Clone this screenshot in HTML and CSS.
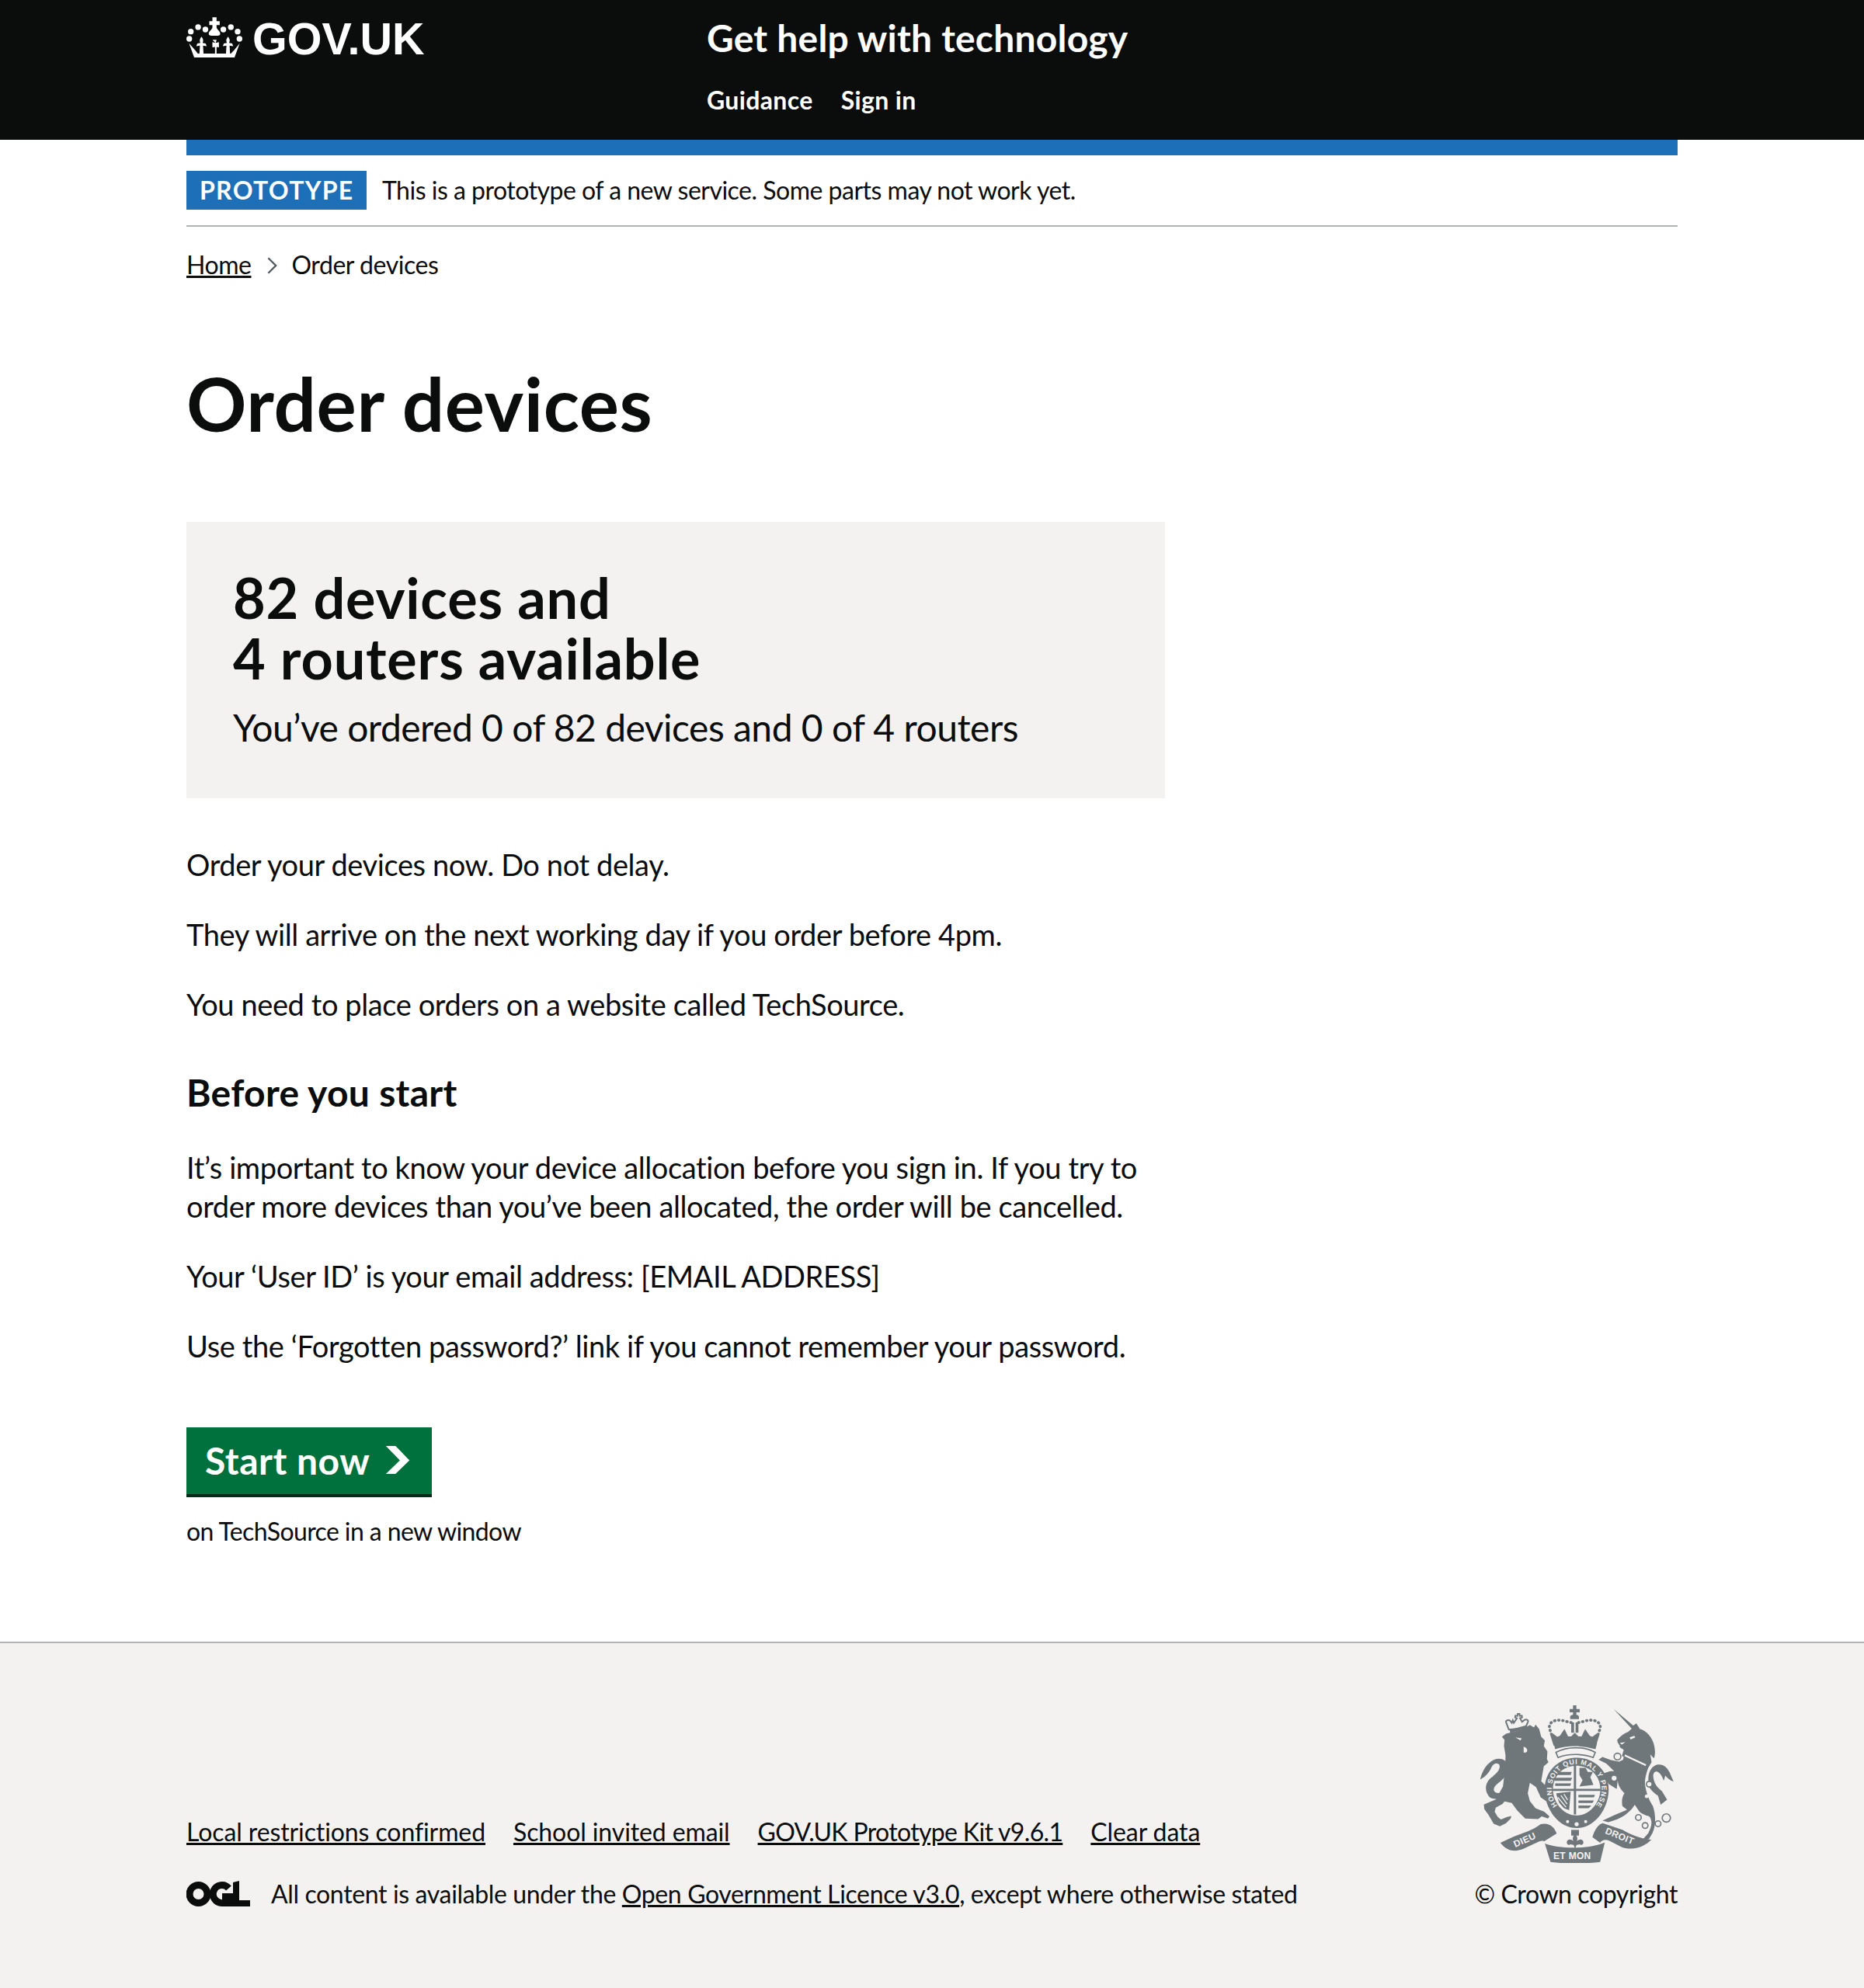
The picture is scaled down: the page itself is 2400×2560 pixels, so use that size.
FILE: index.html
```html
<!DOCTYPE html>
<html lang="en">
<head>
<meta charset="utf-8">
<title>Order devices</title>
<link rel="stylesheet" href="styles.css">
</head>
<body>
<header class="site-header">
  <div class="header-inner">
    <a class="logo" href="#">
      <svg class="crown" viewBox="60 62 215 160" aria-hidden="true">
        <g fill="#fff">
          <circle cx="77" cy="120" r="11"/><circle cx="105" cy="103" r="11"/><circle cx="133" cy="112" r="11"/>
          <circle cx="202" cy="112" r="11"/><circle cx="231" cy="103" r="11"/><circle cx="257" cy="120" r="11"/>
          <circle cx="71" cy="148" r="11"/><circle cx="264" cy="148" r="11"/>
          <path d="M160 65h16v15h12v15h-12v10c4 10 14 14 14 24 0 7-10 7-22 7s-22 0-22-7c0-10 10-14 14-24V95h-12V80h12z"/>
          <path d="M160 152h16l-3 12 12-3v20l-9-2v30h-6v-30l-10 2v-20l12 3z"/>
          <path d="M118 140c6 8 9 14 4 24l12 2 4 10-14-2 2 34h-16l2-34-14 2 4-10 12-2c-5-10-2-16 4-24z"/>
          <path d="M220 140c6 8 9 14 4 24l12 2 4 10-14-2 2 34h-16l2-34-14 2 4-10 12-2c-5-10-2-16 4-24z"/>
          <path d="M70 165l22 25 12 15h127l14-15 20-25-20 55H90z"/>
        </g>
      </svg>
      <span class="wordmark">GOV.UK</span>
    </a>
    <div class="header-content">
      <a class="service-name" href="#">Get help with technology</a>
      <nav class="header-nav">
        <a href="#">Guidance</a>
        <a href="#">Sign in</a>
      </nav>
    </div>
  </div>
</header>

<div class="page-width">
  <div class="phase-banner">
    <strong class="phase-tag">PROTOTYPE</strong>
    <span>This is a prototype of a new service. Some parts may not work yet.</span>
  </div>
  <nav class="breadcrumbs">
    <a href="#">Home</a>
    <svg class="crumb-chevron" viewBox="0 0 14 24" aria-hidden="true"><path d="M1.500 1.500 12 12 1.500 22.500" fill="none" stroke="#505a5f" stroke-width="2.600"/></svg>
    <span>Order devices</span>
  </nav>

  <main class="main">
    <h1 class="page-title">Order devices</h1>
    <div class="column">
      <section class="panel">
        <h2 class="panel-title">82 devices and<br>4 routers available</h2>
        <p class="panel-sub">You’ve ordered 0 of 82 devices and 0 of 4 routers</p>
      </section>
      <p class="body">Order your devices now. Do not delay.</p>
      <p class="body">They will arrive on the next working day if you order before 4pm.</p>
      <p class="body">You need to place orders on a website called TechSource.</p>
      <h2 class="section-title">Before you start</h2>
      <p class="body">It’s important to know your device allocation before you sign in. If you try to order more devices than you’ve been allocated, the order will be cancelled.</p>
      <p class="body">Your ‘User ID’ is your email address: [EMAIL ADDRESS]</p>
      <p class="body">Use the ‘Forgotten password?’ link if you cannot remember your password.</p>
      <a class="start-button" href="#">Start now
        <svg class="start-icon" viewBox="0 0 33 40" aria-hidden="true"><path fill="#fff" d="M0 0h13.100L32 19.500 13 38H0l19-18.500z"/></svg>
      </a>
      <p class="small">on TechSource in a new window</p>
    </div>
  </main>
</div>

<footer class="site-footer">
  <div class="footer-inner">
    <div class="footer-meta">
      <ul class="footer-links">
        <li><a href="#">Local restrictions confirmed</a></li>
        <li><a href="#">School invited email</a></li>
        <li class="link-tight"><a href="#">GOV.UK Prototype Kit v9.6.1</a></li>
        <li><a href="#">Clear data</a></li>
      </ul>
      <div class="licence">
        <svg class="ogl" viewBox="0 0 82 34" aria-hidden="true">
          <circle cx="15.500" cy="17" r="11.500" fill="none" stroke="#0b0c0c" stroke-width="9"/>
          <path d="M54.500 9.500A11.500 11.500 0 1 0 46 28.500" fill="none" stroke="#0b0c0c" stroke-width="9"/>
          <path d="M46 16h14v17H46z" fill="#0b0c0c"/>
          <path d="M60 2l8-2v25h14v8H60z" fill="#0b0c0c"/>
        </svg>
        <span>All content is available under the <a href="#">Open Government Licence v3.0</a>, except where otherwise stated</span>
      </div>
    </div>
    <div class="footer-crest">
      <svg class="crest" viewBox="70 80 750 610" aria-hidden="true">
        <defs><path id="ring-path" d="M371 467A97 97 0 1 1 519 467"/></defs>
        <g class="crest-ink">
          <!-- lion -->
          <path d="M172 190l30-8 40-12 22-14 16 10 6-12 14 18 8 30 14 14-4 22 14 20-2 30 6 12-18 16-6 34-4 24 26 26 12 22 14 14-6 16-22 2-26-18-18-40-24-16-8 40 8 30 22 28 34 14 20 18-6 8-24-8-14 10-50-2-30-30-22-30-28-6-8 10-26 14-4 16 12 20 12 10 24-10 16-4-2 10-18 18-24 12-24-10-20-34-16-22-2-18 46-20 28-50 8-70 2-50-6-36 2-24-10-12z"/>
          <path d="M108 435c-22-24-18-58 10-78 16-12 34-30 28-46-6-10-22-8-30 8-8 20-24 38-44 48 6-30 24-62 52-76 26-10 50-2 54 24 4 26-14 50-34 64-20 14-28 34-8 40 12 2 24-4 36-10l6 16c-24 14-50 24-70 10z"/>
          <path d="M183 174l-11-28c-2-8 10-12 16-6l6 8 4-10 4 10 12-18-7-3 1-7 8 1 1-8h7l1 8 8-1 1 7-8 3 8 14 10-8c8-4 16 2 12 10l-10 22z" fill="none" stroke="#6f777b" stroke-width="6"/>
          <path d="M186 175l66-18 4 10-68 20z"/>
          <!-- unicorn -->
          <path d="M588 94L664 158 676 150 690 172C715 178 740 205 746 240 750 262 748 275 744 285L730 270 735 300 722 322C712 350 705 375 712 400 716 420 722 440 740 470 752 505 752 545 738 575L724 598 700 600 722 575C738 545 738 525 726 510 710 505 690 500 680 480L670 465C655 490 630 510 600 522L568 532 545 526 590 505 640 484 622 470C618 450 622 430 630 420 610 400 605 385 604 370L600 404 570 385 542 345 575 335 590 335 560 305 530 290 545 280 578 292 610 298 625 290 630 262 625 250C612 245 610 240 612 236L604 224 602 214C615 198 630 188 645 182L658 170z"/>
          <path d="M728 400C715 360 725 320 755 310 780 305 795 320 805 340L820 375C805 370 795 360 788 352L782 372C776 355 768 340 756 336 742 334 738 350 744 370 750 390 760 400 775 412L795 445 770 465 760 430C745 420 735 410 728 400z"/>
          <!-- royal crown -->
          <path d="M431 78h13v16h13v13h-13v10c6 0 10 4 10 8v8h-34v-8c0-4 4-8 11-8v-10h-13V94h13z"/>
          <path d="M424 146h11v40h-11zM441 146h11v40h-11z"/>
          <path d="M356 236l-14-44c-2-6 6-8 10-4l18 14 10-4 18-26 14 28 12 0 14-14 14 14 12 0 14-28 18 26 10 4 18-14c4-4 12-2 10 4l-14 44z"/>
          <path d="M365 262c22-12 48-18 76-18s54 6 76 18l-8 20c-20-8-42-12-68-12s-50 4-68 12z" fill="#f3f2f1" stroke="#6f777b" stroke-width="5"/>
          <path d="M356 226h168l-6 24c-24-8-50-12-78-12s-54 4-78 12z"/>
          <path d="M343 178c-14-30 16-50 60-36l34 8M533 178c14-30-16-50-60-36l-34 8" fill="none" stroke="#6f777b" stroke-width="11" stroke-dasharray="2 14" stroke-linecap="round"/>
          <!-- shield -->
          <path d="M445 283c70 0 124 52 124 122 0 72-52 150-124 150s-124-78-124-150c0-70 54-122 124-122z"/>
          <path d="M445 314c-52 0-92 38-92 92 0 40 34 100 92 100s92-60 92-100c0-54-40-92-92-92z" class="crest-paper"/>
          <path d="M350 403h188v8H350zM434 312h9v190h-9z"/>
          <path d="M362 338h64l-4 12h-60zM360 360h68l-6 12h-62zM362 382h62l-4 10h-58z"/>
          <path d="M456 322h24l8 16h20l-10 20 12 30-54 6 12-24-12-20z"/>
          <path d="M366 420l56-6-6 72-20-8-18-20-10-28z"/>
          <path d="M452 426h64l-4 10h-60zM452 448h60l-6 10h-54zM452 468h50l-10 10h-40z"/>
          <path d="M372 436l32 38M384 428l24 34M396 424l14 22" fill="none" class="crest-paper-line"/>
          <circle cx="445" cy="540" r="8" class="crest-paper"/>
          <circle cx="410" cy="530" r="6" class="crest-paper"/>
          <circle cx="480" cy="530" r="6" class="crest-paper"/>
          <!-- chain -->
          <circle cx="603" cy="278" r="13" class="crest-link"/>
          <circle cx="590" cy="362" r="12" class="crest-link"/>
          <circle cx="726" cy="385" r="11" class="crest-link"/>
          <circle cx="716" cy="432" r="7" class="crest-paper"/>
          <circle cx="684" cy="514" r="11" class="crest-link"/>
          <circle cx="710" cy="545" r="11" class="crest-link"/>
          <circle cx="760" cy="538" r="11" class="crest-link"/>
          <circle cx="792" cy="516" r="16" class="crest-link"/>
          <!-- collar -->
          <path d="M626 256l96 44-4 20-98-44z"/>
          <path d="M632 270l82 38-2 7-82-38z" class="crest-paper"/>
          <!-- faces -->
          <path d="M208 204l24 4-4 8zM240 240c8 2 14 8 14 14s-8 12-14 8z" class="crest-paper"/>
          <path d="M650 204l18-6 4 6-18 8zM612 226l22-4-14 10z" class="crest-paper"/>
          <!-- ribbons -->
          <path d="M150 612l52-24c38-14 76-26 104-48 30-8 52 8 62 36l-48 30c-10-2-12-2-18 0l-60 28c-30 14-65 14-92-22z"/>
          <path d="M322 615c60 22 170 22 232-5l-18 76c-64 8-128 8-192 0z"/>
          <path d="M506 590c10-32 24-50 40-54l78 26c30 18 62 32 110 38-24 24-60 44-112 30l-50-26c-14-6-30-4-36 8z"/>
          <!-- fleur -->
          <path d="M424 562h30v22h-30z"/>
          <path d="M439 578c8 8 12 18 6 28 10-10 24-8 26 2 2 8-6 16-14 10l-12 2-6 14-6-14-12-2c-8 6-16-2-14-10 2-10 16-12 26-2-6-10-2-20 6-28z"/>
        </g>
        <g class="crest-text">
          <text x="208" y="630" transform="rotate(-24 208 630)">DIEU</text>
          <text x="355" y="676">ET MON</text>
          <text x="553" y="575" transform="rotate(22 553 575)">DROIT</text>
          <text class="crest-ring"><textPath href="#ring-path" textLength="440" lengthAdjust="spacing">HONI SOIT QUI MAL Y PENSE</textPath></text>
        </g>
      </svg>
      <a class="crown-copyright" href="#">© Crown copyright</a>
    </div>
  </div>
</footer>
</body>
</html>
```

FILE: styles.css
```css
* { box-sizing: border-box; }
html, body { margin: 0; padding: 0; height: 100%; }
body {
  min-height: 2560px;
  display: flex;
  flex-direction: column;
  font-family: Lato, "Noto Sans", sans-serif;
  font-variant-ligatures: none;
  color: #0b0c0c;
  background: #fff;
  font-size: 38px;
  line-height: 50px;
  letter-spacing: -0.4px;
}
a { color: inherit; }
.site-header { background: #0b0c0c; height: 180px; flex: none; }
.header-inner {
  margin: 0 240px;
  height: 200px;
  border-bottom: 20px solid #1d70b8;
  display: flex;
}
.logo {
  width: 670px;
  flex: none;
  display: flex;
  align-items: flex-start;
  gap: 12px;
  padding-top: 21px;
  text-decoration: none;
  color: #fff;
}
.crown { width: 72px; height: 54px; flex: none; }
.wordmark {
  font-family: "Liberation Sans", Arial, sans-serif;
  font-weight: 700;
  font-size: 57.500px;
  line-height: 58px;
  letter-spacing: 0;
  margin-left: 1px;
}
.header-content { display: flex; flex-direction: column; color: #fff; }
.service-name {
  font-size: 48px;
  font-weight: 700;
  line-height: 60px;
  letter-spacing: 0.2px;
  margin-top: 19px;
  text-decoration: none;
}
.header-nav { display: flex; gap: 36px; margin-top: 30px; letter-spacing: 0.35px; }
.header-nav a {
  font-size: 32px;
  font-weight: 700;
  line-height: 40px;
  text-decoration: none;
}
.page-width { margin: 0 240px; flex: none; }
.phase-banner {
  margin-top: 20px;
  padding: 20px 0;
  border-bottom: 2px solid #b1b4b6;
  display: flex;
  align-items: center;
  gap: 20px;
  font-size: 32px;
  line-height: 50px;
  letter-spacing: -0.5px;
}
.phase-tag {
  background: #1d70b8;
  color: #fff;
  font-weight: 700;
  letter-spacing: 1.300px;
  padding: 0 17px;
  width: 232px;
  height: 50px;
  line-height: 50px;
  flex: none;
}
.breadcrumbs {
  display: flex;
  align-items: center;
  margin-top: 29px;
  font-size: 32px;
  line-height: 40px;
  letter-spacing: -0.45px;
}
.crumb-chevron { width: 13px; height: 24px; margin: 2px 19px 0 20px; flex: none; }
.main { padding-top: 108px; }
.page-title {
  margin: 0 0 103px;
  font-size: 96px;
  line-height: 100px;
  font-weight: 700;
  letter-spacing: 0.6px;
}
.column { width: 1260px; }
.panel {
  background: #f3f2f1;
  padding: 58px 60px 0;
  height: 356px;
}
.panel-title {
  margin: 0;
  font-size: 72px;
  line-height: 78px;
  font-weight: 700;
  letter-spacing: 0.8px;
}
.panel-sub {
  margin: 21px 0 0;
  font-size: 48px;
  line-height: 60px;
  letter-spacing: -0.5px;
}
.body { margin: 0 0 40px; }
.panel + .body { margin-top: 60px; }
.section-title {
  margin: 59px 0 41px;
  font-size: 48px;
  line-height: 60px;
  font-weight: 700;
  letter-spacing: 0.3px;
}
.start-button {
  margin-top: 40px;
  display: inline-flex;
  align-items: center;
  gap: 20px;
  height: 90px;
  width: 316px;
  padding: 0 26px 0 24px;
  background: #00703c;
  border-bottom: 4px solid #002d18;
  color: #fff;
  font-size: 48px;
  line-height: 60px;
  font-weight: 700;
  letter-spacing: 0.5px;
  text-decoration: none;
  white-space: nowrap;
}
.start-icon { width: 33px; height: 38px; flex: none; }
.small { margin: 24px 0 0; font-size: 32px; line-height: 40px; letter-spacing: -0.6px; }
.site-footer {
  margin-top: 122px;
  flex: 1;
  background: #f3f2f1;
  border-top: 2px solid #b1b4b6;
  font-size: 32px;
  line-height: 40px;
}
.footer-inner {
  margin: 0 240px;
  padding-top: 80px;
  display: flex;
  justify-content: space-between;
  align-items: flex-end;
}
.footer-links {
  list-style: none;
  margin: 0 0 40px;
  padding: 0;
  display: flex;
  gap: 36px;
  letter-spacing: -0.1px;
}
.footer-links .link-tight { letter-spacing: -0.66px; }
.licence { display: flex; align-items: center; gap: 27px; letter-spacing: -0.36px; }
.ogl { width: 82px; height: 34px; flex: none; }
.footer-crest { display: flex; flex-direction: column; align-items: flex-end; }
.crest { width: 250px; height: 203px; margin-right: 5px; margin-bottom: 20px; }
.crest-ink { fill: #6f777b; }
.crest-paper { fill: #f3f2f1; }
.crest-paper-line { stroke: #f3f2f1; stroke-width: 4; }
.crest-link { fill: #f3f2f1; stroke: #6f777b; stroke-width: 5; }
.crest-text text {
  fill: #f3f2f1;
  font-family: "Liberation Sans", Arial, sans-serif;
  font-size: 36px;
  letter-spacing: 1px;
  font-weight: 700;
}
.crest-text .crest-ring { font-size: 27px; letter-spacing: 0; }
.crown-copyright { text-decoration: none; white-space: nowrap; letter-spacing: -0.4px; }
```
